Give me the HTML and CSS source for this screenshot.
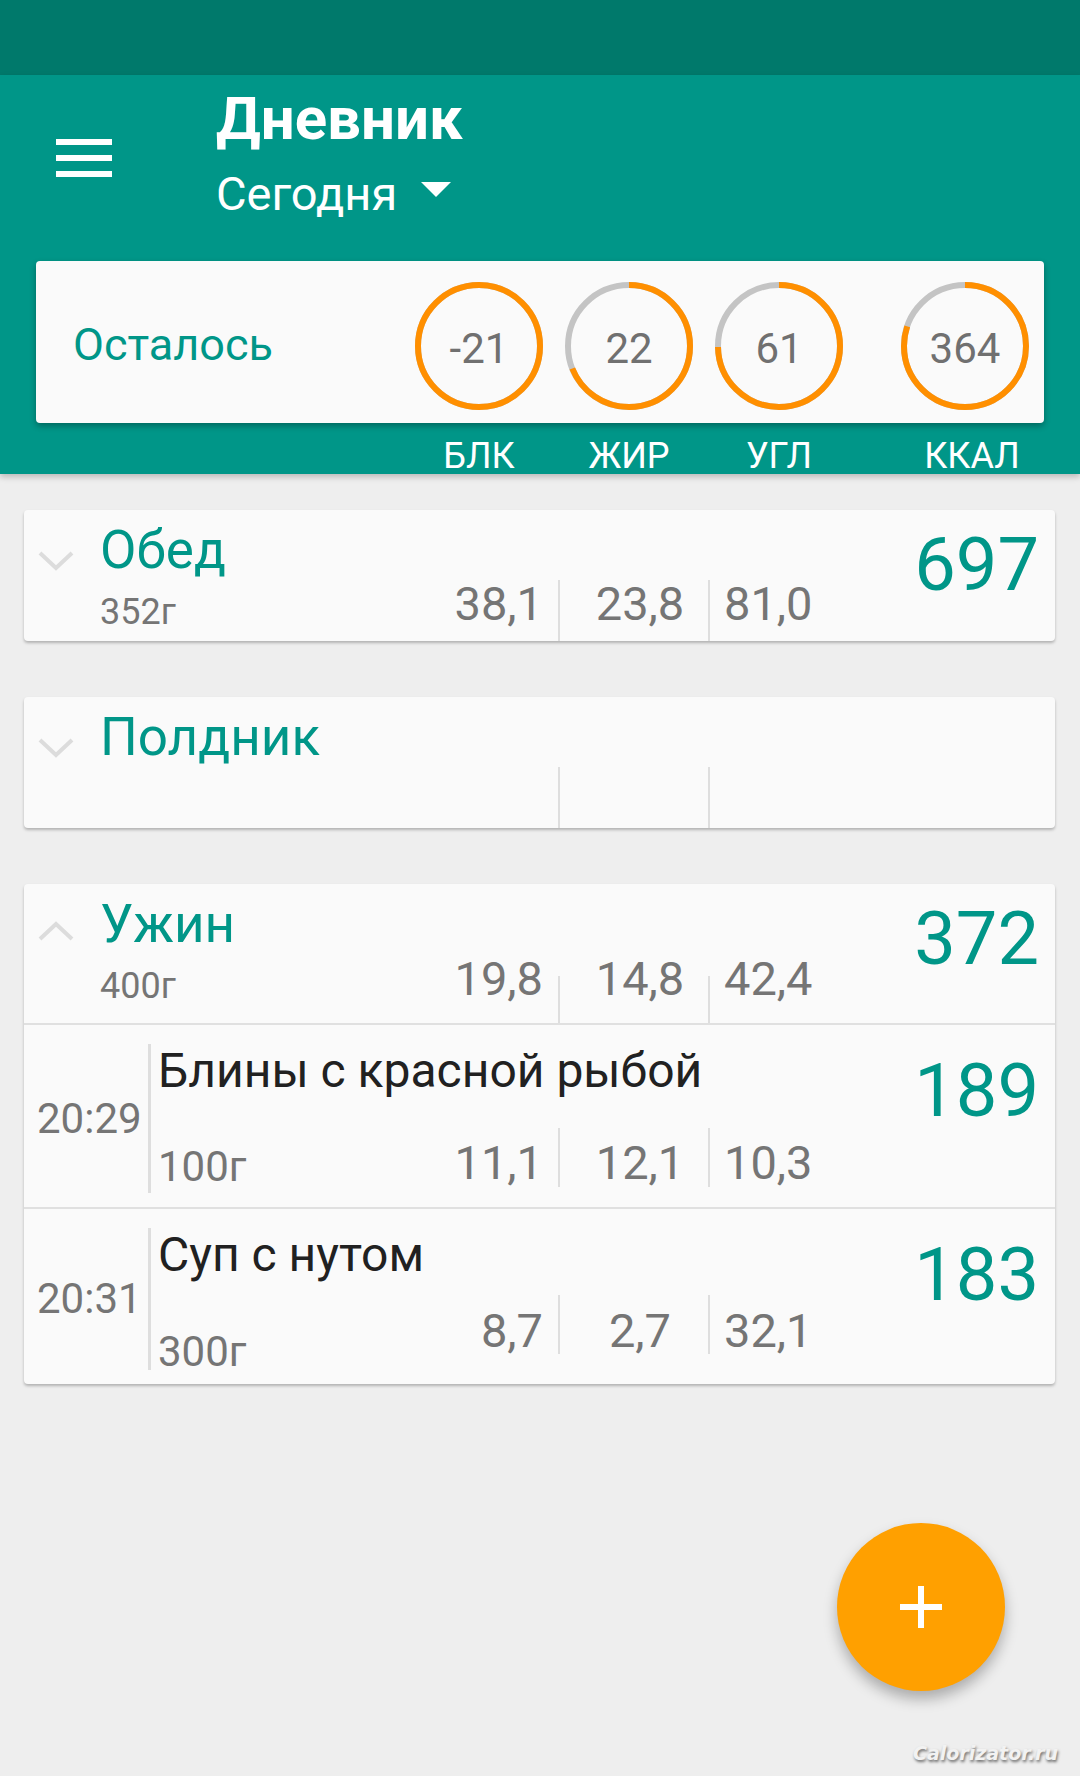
FILE: index.html
```html
<!DOCTYPE html>
<html lang="ru">
<head>
  <meta charset="UTF-8">
  <title>Дневник</title>
  <link rel="stylesheet" href="styles.css">
</head>
<body>
  <div class="screen">
    <div class="statusbar"></div>

    <!-- Шапка -->
    <header class="appbar">
      <div class="appbar-top">
        <div class="burger"><span></span><span></span><span></span></div>
        <div class="appbar-titles">
          <div class="appbar-title">Дневник</div>
          <div class="appbar-date">Сегодня
            <svg class="caret" width="30" height="15" viewBox="0 0 30 15"><polygon points="0,0 30,0 15,15" fill="#fff"/></svg>
          </div>
        </div>
      </div>

      <div class="summary">
        <div class="summary-label">Осталось</div>
        <div class="rings">
          <div class="ring">
            <svg width="128" height="128" viewBox="0 0 128 128">
              <circle cx="64" cy="64" r="61" class="ring-bg"/>
              <circle cx="64" cy="64" r="61" class="ring-fg" stroke-dasharray="384 384" transform="rotate(-90 64 64)"/>
            </svg>
            <span>-21</span>
          </div>
          <div class="ring">
            <svg width="128" height="128" viewBox="0 0 128 128">
              <circle cx="64" cy="64" r="61" class="ring-bg"/>
              <circle cx="64" cy="64" r="61" class="ring-fg" stroke-dasharray="264 384" transform="rotate(-90 64 64)"/>
            </svg>
            <span>22</span>
          </div>
          <div class="ring">
            <svg width="128" height="128" viewBox="0 0 128 128">
              <circle cx="64" cy="64" r="61" class="ring-bg"/>
              <circle cx="64" cy="64" r="61" class="ring-fg" stroke-dasharray="286 384" transform="rotate(-90 64 64)"/>
            </svg>
            <span>61</span>
          </div>
          <div class="ring ring--kcal">
            <svg width="128" height="128" viewBox="0 0 128 128">
              <circle cx="64" cy="64" r="61" class="ring-bg"/>
              <circle cx="64" cy="64" r="61" class="ring-fg" stroke-dasharray="307 384" transform="rotate(-90 64 64)"/>
            </svg>
            <span>364</span>
          </div>
        </div>
      </div>

      <div class="ring-labels">
        <span>БЛК</span>
        <span>ЖИР</span>
        <span>УГЛ</span>
        <span class="ring--kcal label-kcal">ККАЛ</span>
      </div>
    </header>

    <!-- Приёмы пищи -->
    <div class="meals">
      <div class="meal">
        <div class="meal-head">
          <div class="chev">
            <svg width="36" height="20" viewBox="0 0 36 20"><polyline points="2,2 18,17 34,2" fill="none" stroke="#dcdcdc" stroke-width="4"/></svg>
          </div>
          <div class="meal-name">Обед</div>
          <div class="meal-kcal">697</div>
          <div class="meal-weight">352г</div>
          <div class="mac mac-p"><span>38,1</span></div>
          <div class="mac mac-f"><span>23,8</span></div>
          <div class="mac mac-c"><span>81,0</span></div>
        </div>
      </div>

      <div class="meal">
        <div class="meal-head">
          <div class="chev">
            <svg width="36" height="20" viewBox="0 0 36 20"><polyline points="2,2 18,17 34,2" fill="none" stroke="#dcdcdc" stroke-width="4"/></svg>
          </div>
          <div class="meal-name">Полдник</div>
          <div class="mac mac-p"></div>
          <div class="mac mac-f"></div>
          <div class="mac mac-c"></div>
        </div>
      </div>

      <div class="meal meal--open">
        <div class="meal-head">
          <div class="chev chev--up">
            <svg width="36" height="20" viewBox="0 0 36 20"><polyline points="2,18 18,3 34,18" fill="none" stroke="#dcdcdc" stroke-width="4"/></svg>
          </div>
          <div class="meal-name">Ужин</div>
          <div class="meal-kcal">372</div>
          <div class="meal-weight">400г</div>
          <div class="mac mac-p"><span>19,8</span></div>
          <div class="mac mac-f"><span>14,8</span></div>
          <div class="mac mac-c"><span>42,4</span></div>
        </div>

        <div class="entry">
          <div class="entry-time">20:29</div>
          <div class="entry-name">Блины с красной рыбой</div>
          <div class="entry-kcal">189</div>
          <div class="entry-weight">100г</div>
          <div class="mac mac-p"><span>11,1</span></div>
          <div class="mac mac-f"><span>12,1</span></div>
          <div class="mac mac-c"><span>10,3</span></div>
        </div>

        <div class="entry entry--raised">
          <div class="entry-time">20:31</div>
          <div class="entry-name">Суп с нутом</div>
          <div class="entry-kcal">183</div>
          <div class="entry-weight">300г</div>
          <div class="mac mac-p"><span>8,7</span></div>
          <div class="mac mac-f"><span>2,7</span></div>
          <div class="mac mac-c"><span>32,1</span></div>
        </div>
      </div>
    </div>

    <button class="fab">
      <svg width="42" height="42" viewBox="0 0 42 42"><path d="M21 0v42M0 21h42" stroke="#fff" stroke-width="6"/></svg>
    </button>

    <div class="watermark">Calorizator.ru</div>
  </div>
</body>
</html>
```

FILE: styles.css
```css
body {
  margin: 0;
  font-family: Roboto, "Noto Sans", sans-serif;
  background: #eeeeee;
}

.screen {
  position: relative;
  width: 1080px;
  min-height: 1776px;
  overflow: hidden;
  background: #eeeeee;
}

.statusbar {
  height: 75px;
  background: #00796b;
}

/* шапка */
.appbar {
  position: relative;
  z-index: 1;
  background: #009688;
  color: #fff;
  box-shadow: 0 3px 6px rgba(0, 0, 0, 0.22);
}

.appbar-top {
  display: flex;
  align-items: flex-start;
}

.burger {
  display: flex;
  flex-direction: column;
  gap: 10px;
  margin: 64px 0 0 56px;
}

.burger span {
  display: block;
  width: 56px;
  height: 6px;
  background: #fff;
}

.appbar-titles {
  margin: 9px 0 0 104px;
}

.appbar-title {
  font-size: 60px;
  font-weight: bold;
  line-height: 70px;
}

.appbar-date {
  display: flex;
  align-items: center;
  margin-top: 12px;
  font-size: 47px;
  line-height: 56px;
}

.caret {
  margin: 0 0 9px 24px;
}

.summary {
  display: flex;
  align-items: center;
  height: 162px;
  margin: 39px 36px 0;
  padding: 0 15px 0 37px;
  box-sizing: border-box;
  background: #fafafa;
  border-radius: 4px;
  box-shadow: 0 3px 6px rgba(0, 0, 0, 0.3);
}

.summary-label {
  flex: 1;
  color: #009688;
  font-size: 45px;
  padding-top: 4px;
}

.rings {
  display: flex;
  gap: 22px;
  margin-top: 8px;
}

.ring {
  display: grid;
  place-items: center;
  width: 128px;
  height: 128px;
}

.ring svg,
.ring span {
  grid-area: 1 / 1;
}

.ring span {
  padding-top: 4px;
  color: #707070;
  font-size: 42px;
}

.ring--kcal {
  margin-left: 36px;
}

.ring-bg {
  fill: none;
  stroke: #c4c4c4;
  stroke-width: 6;
}

.ring-fg {
  fill: none;
  stroke: #ff8f00;
  stroke-width: 6;
}

.ring-labels {
  display: flex;
  justify-content: flex-end;
  gap: 22px;
  margin: 15px 51px 0;
  font-size: 36px;
  line-height: 36px;
}

.ring-labels span {
  width: 128px;
  text-align: center;
}

.label-kcal {
  padding-left: 14px;
  box-sizing: border-box;
}

/* карточки */
.meals {
  padding: 36px 25px 0 24px;
}

.meal {
  background: #fafafa;
  border-radius: 4px;
  box-shadow: 0 2px 3px rgba(0, 0, 0, 0.25);
  margin-bottom: 56px;
  overflow: hidden;
}

.meal-head,
.entry {
  display: grid;
  grid-template-columns: 76px 350px 110px 150px 170px 1fr;
  padding-right: 16px;
}

.meal-head {
  grid-template-rows: 70px 61px;
}

.meal--open .meal-head {
  grid-template-rows: 70px 69px;
}

.chev {
  grid-column: 1;
  grid-row: 1 / 3;
  padding: 41px 0 0 14px;
}

.chev--up {
  padding-top: 37px;
}

.meal-name {
  grid-column: 2 / 6;
  grid-row: 1;
  color: #009688;
  font-size: 53px;
  line-height: 60px;
  padding-top: 10px;
}

.meal-kcal,
.entry-kcal {
  grid-column: 6;
  grid-row: 1 / 3;
  text-align: right;
  color: #009688;
  font-size: 74px;
  line-height: 76px;
  padding-top: 17px;
}

.meal-weight {
  grid-column: 2;
  grid-row: 2;
  color: #757575;
  font-size: 36px;
  line-height: 48px;
  padding-top: 8px;
}

.mac {
  grid-row: 2;
  color: #757575;
  font-size: 47px;
  line-height: 48px;
  box-sizing: border-box;
}

.mac span {
  display: block;
}

.mac-p {
  grid-column: 3;
  text-align: right;
  padding-right: 15px;
  border-right: 2px solid #dedede;
}

.mac-f {
  grid-column: 4;
  text-align: center;
  padding-left: 12px;
  border-right: 2px solid #dedede;
}

.mac-c {
  grid-column: 5;
  padding-left: 14px;
}

.meal--open .meal-head .mac {
  margin-top: 22px;
}

.meal--open .meal-head .mac span {
  margin-top: -21px;
}

/* записи */
.entry {
  grid-template-columns: 127px 299px 110px 150px 170px 1fr;
  grid-template-rows: 76px auto;
  border-top: 2px solid #e0e0e0;
}

.entry-time {
  grid-column: 1;
  grid-row: 1 / 3;
  display: flex;
  align-items: center;
  margin: 19px 0 14px;
  padding-left: 13px;
  border-right: 3px solid #dedede;
  color: #757575;
  font-size: 42px;
  line-height: 48px;
}

.entry-name {
  grid-column: 2 / 6;
  grid-row: 1;
  padding: 16px 0 0 7px;
  color: #212121;
  font-size: 48px;
  line-height: 60px;
  white-space: nowrap;
}

.entry-kcal {
  padding-top: 28px;
}

.entry-weight {
  grid-column: 2;
  grid-row: 2;
  align-self: end;
  margin-bottom: 16px;
  padding-left: 7px;
  color: #757575;
  font-size: 42px;
  line-height: 48px;
}

.entry .mac {
  height: 59px;
  margin: 27px 0 20px;
}

.entry .mac span {
  padding-top: 11px;
}

.entry--raised .mac {
  margin: 10px 0 30px;
}

.entry--raised .mac span {
  padding-top: 12px;
}

.entry--raised .entry-weight {
  margin-bottom: 8px;
}

/* плавающая кнопка */
.fab {
  position: absolute;
  right: 75px;
  bottom: 85px;
  width: 168px;
  height: 168px;
  border: none;
  border-radius: 50%;
  background: #ffa000;
  box-shadow: 0 8px 14px rgba(0, 0, 0, 0.28);
  display: flex;
  align-items: center;
  justify-content: center;
  padding: 0;
}

.watermark {
  position: absolute;
  right: 22px;
  bottom: 12px;
  font-family: "DejaVu Sans", sans-serif;
  font-size: 19px;
  font-weight: bold;
  font-style: italic;
  color: #f2f2f2;
  text-shadow: 1px 2px 3px rgba(0, 0, 0, 0.55);
}
```
